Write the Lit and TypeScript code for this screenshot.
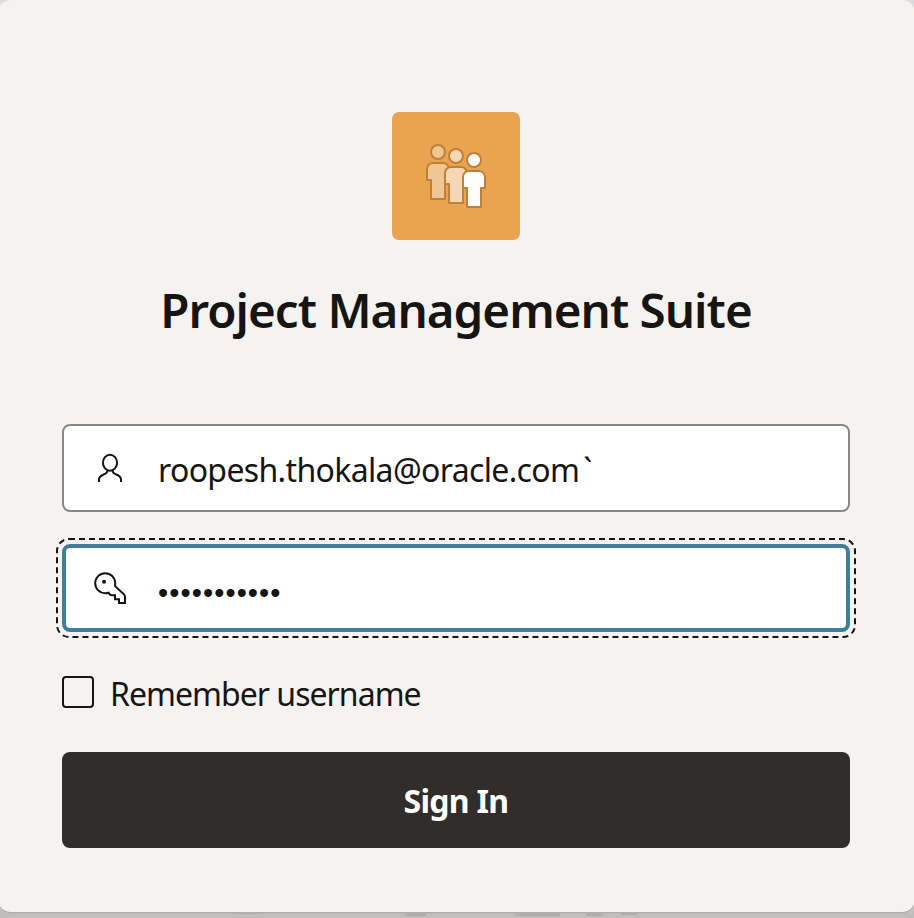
import { LitElement, html, css, svg } from "lit";
import { customElement, state } from "lit/decorators.js";

const people = [
  { dx: -36, dy: -8, fill: "#f0c793" },
  { dx: -18, dy: -4, fill: "#f4d7b5" },
  { dx: 0, dy: 0, fill: "#fdfdfc" },
];

const logo = html`<svg class="logo" viewBox="0 0 128 128" aria-hidden="true">
  <rect width="128" height="128" rx="7" fill="#eaa350" />
  ${people.map(
    (p) => svg`<g transform="translate(${p.dx} ${p.dy})" fill=${p.fill} stroke="#bf8139" stroke-width="2" stroke-linejoin="round">
      <circle cx="82" cy="48" r="7" />
      <path d="M71 76V65a6 6 0 0 1 6-6H87a6 6 0 0 1 6 6V76H89V95H75V76Z" />
    </g>`
  )}
</svg>`;

const userIcon = html`<svg class="icon" viewBox="0 0 32 32" fill="none" stroke="#161513" stroke-width="2" aria-hidden="true">
  <ellipse cx="16" cy="10.8" rx="7.1" ry="8" />
  <path d="M5 30V27.4C5 24.4 7 23.6 9.3 22.7C12 21.6 13.5 21 13.5 18.2M27 30V27.4C27 24.4 25 23.6 22.7 22.7C20 21.6 18.5 21 18.5 18.2" />
</svg>`;

const keyIcon = html`<svg class="icon" viewBox="0 0 32 32" fill="none" stroke="#161513" stroke-width="2" aria-hidden="true">
  <path d="M21.1 14.2C21.3 13 21.2 12 21.2 11A10 10 0 1 0 11 21.2C12.4 21.2 13.5 21 14.6 20.7C15.4 22.6 16.4 23.3 18 23.3H21V27.2H25V31H31V24.8C31 23.6 30.4 22.8 29.6 22Z" />
  <circle cx="10" cy="9.8" r="2" fill="#161513" stroke="none" />
</svg>`;

// Faint text of the page behind the card, just visible under its lower edge.
const smudges = html`<svg class="backdrop" viewBox="0 0 914 6" aria-hidden="true">
  <g fill="#b0afae">
    <rect x="234" width="25" height="2" />
    <rect x="405" width="21" height="4" />
    <rect x="515" width="45" height="4" />
    <rect x="586" width="17" height="4" />
    <rect x="622" width="16" height="3" />
  </g>
</svg>`;

@customElement("app-root")
export class AppRoot extends LitElement {
  @state() private remember = false;

  static styles = css`
    :host {
      display: block;
      height: 918px;
      overflow: hidden;
      background: linear-gradient(#dedddd 0, #dedddd 880px, #bfbebc 914px);
      color: #161513;
      font-family: "Noto Sans", sans-serif;
    }
    .card {
      box-sizing: border-box;
      height: 912px;
      margin: 0 -1px 0 -2px;
      padding: 112px 65px 0 64px;
      border-radius: 13px;
      background: #f4f3f1;
      box-shadow: 0 1px 1px #aaa9a8;
      display: flex;
      flex-direction: column;
    }
    .backdrop {
      display: block;
      width: 914px;
      height: 6px;
    }
    .logo {
      width: 128px;
      height: 128px;
      align-self: center;
    }
    h1 {
      margin: 38px 0 0;
      font-size: 47.5px;
      line-height: 64px;
      font-weight: 600;
      text-align: center;
      white-space: nowrap;
      letter-spacing: -0.97px;
    }
    .field {
      box-sizing: border-box;
      height: 88px;
      border: 2px solid #8b8987;
      border-radius: 8px;
      background: #fff;
      display: flex;
      align-items: center;
      padding-left: 30px;
      gap: 32px;
      font-size: 32px;
      line-height: 44px;
    }
    .user {
      margin-top: 82px;
    }
    .password {
      position: relative;
      margin-top: 32px;
      border: 4px solid #417e9b;
      padding-left: 28px;
    }
    .ring {
      position: absolute;
      inset: -10px;
      width: calc(100% + 20px);
      height: calc(100% + 20px);
    }
    .icon {
      width: 32px;
      height: 32px;
      flex: none;
    }
    .value {
      white-space: nowrap;
      letter-spacing: -0.65px;
      padding-top: 3px;
    }
    .tick {
      margin-left: 4px;
    }
    .dots {
      white-space: nowrap;
      font-family: "Liberation Sans", sans-serif;
      font-size: 29px;
      letter-spacing: 1.08px;
      padding-top: 9px;
    }
    .remember {
      margin-top: 40px;
      height: 40px;
      display: flex;
      align-items: center;
      gap: 16px;
      font-size: 32px;
      line-height: 40px;
    }
    .box {
      box-sizing: border-box;
      width: 32px;
      height: 32px;
      border: 2px solid #161513;
      border-radius: 4px;
    }
    .label {
      white-space: nowrap;
      letter-spacing: -0.97px;
      padding-top: 3px;
    }
    button {
      margin: 40px 0 0;
      border: 0;
      padding: 2px 0 0;
      height: 96px;
      border-radius: 8px;
      background: #312d2a;
      color: #fff;
      font: 700 32px/44px "Noto Sans", sans-serif;
      letter-spacing: -0.7px;
    }
  `;

  render() {
    return html`<main class="card">
        ${logo}
        <h1>Project Management Suite</h1>
        <div class="field user">${userIcon}<span class="value">roopesh.thokala@oracle.com<span class="tick">\`</span></span></div>
        <div class="field password">
          <svg class="ring" viewBox="0 0 800 100" aria-hidden="true">
            <rect x="1" y="1" width="798" height="98" rx="12" fill="none" stroke="#161513" stroke-width="2" stroke-dasharray="6 4" />
          </svg>
          ${keyIcon}<span class="dots">•••••••••••</span>
        </div>
        <div class="remember" role="checkbox" aria-checked=${this.remember} @click=${() => (this.remember = !this.remember)}>
          <span class="box"></span><span class="label">Remember username</span>
        </div>
        <button>Sign In</button>
      </main>
      ${smudges}`;
  }
}
